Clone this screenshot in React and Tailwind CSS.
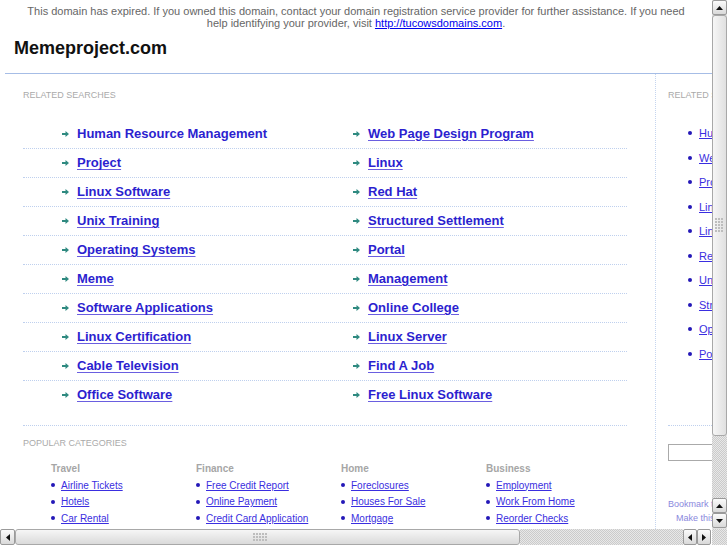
import React from "react";

const related = [
  ["Human Resource Management", "Web Page Design Program"],
  ["Project", "Linux"],
  ["Linux Software", "Red Hat"],
  ["Unix Training", "Structured Settlement"],
  ["Operating Systems", "Portal"],
  ["Meme", "Management"],
  ["Software Applications", "Online College"],
  ["Linux Certification", "Linux Server"],
  ["Cable Television", "Find A Job"],
  ["Office Software", "Free Linux Software"],
];

const categories = [
  { title: "Travel", links: ["Airline Tickets", "Hotels", "Car Rental"] },
  { title: "Finance", links: ["Free Credit Report", "Online Payment", "Credit Card Application"] },
  { title: "Home", links: ["Foreclosures", "Houses For Sale", "Mortgage"] },
  { title: "Business", links: ["Employment", "Work From Home", "Reorder Checks"] },
];

const sideLinks = [
  "Human Resource Management",
  "Web Page Design Program",
  "Project",
  "Linux",
  "Linux Software",
  "Red Hat",
  "Unix Training",
  "Structured Settlement",
  "Operating Systems",
  "Portal",
];

function Arrow() {
  return (
    <svg width="7" height="6" viewBox="0 0 7 6" className="shrink-0">
      <path d="M0 2h3.5V0L7 3 3.5 6V4H0z" fill="#2f8a80" />
    </svg>
  );
}

function Tri({ dir }) {
  const d = {
    up: "M0 4L3.5 0 7 4z",
    down: "M0 0h7L3.5 4z",
    left: "M4 0v7L0 3.5z",
    right: "M0 0l4 3.5L0 7z",
  }[dir];
  const vertical = dir === "up" || dir === "down";
  return (
    <svg width={vertical ? 7 : 4} height={vertical ? 4 : 7} viewBox={vertical ? "0 0 7 4" : "0 0 4 7"}>
      <path d={d} fill="#111" />
    </svg>
  );
}

function ScrollButton({ dir, className = "" }) {
  return (
    <div
      className={`flex items-center justify-center border border-[#9a9a9a] rounded-[2px] bg-gradient-to-b from-[#fbfbfb] to-[#d9d9d9] ${className}`}
    >
      <Tri dir={dir} />
    </div>
  );
}

function Grip({ vertical }) {
  const dots = [];
  const cols = vertical ? 3 : 5;
  const rows = vertical ? 5 : 3;
  for (let r = 0; r < rows; r++)
    for (let c = 0; c < cols; c++)
      dots.push(<rect key={`${r}-${c}`} x={c * 3} y={r * 3} width="2" height="2" fill="#bdbdbd" />);
  return (
    <svg width={cols * 3} height={rows * 3}>
      {dots}
    </svg>
  );
}

const track =
  "bg-[repeating-conic-gradient(#cbcbcb_0_25%,#e8e8e8_0_50%)] bg-[length:2px_2px]";

export default function App() {
  return (
    <div className="w-[727px] h-[545px] flex flex-col overflow-hidden bg-white font-['Liberation_Sans',Arial,sans-serif]">
      <div className="flex h-[529px]">
        <div className="w-[712px] h-full overflow-hidden">
          <p className="pt-[5px] px-[20px] text-center text-[11px] leading-[12px] text-[#666]">
            This domain has expired. If you owned this domain, contact your domain registration service provider for
            further assistance. If you need help identifying your provider, visit{" "}
            <a href="#" className="text-[#0000ee] underline">
              http://tucowsdomains.com
            </a>
            .
          </p>

          <div className="ml-[5px] w-[820px]">
            <h1 className="mt-[8px] pl-[9px] text-[18px] leading-[22px] font-bold text-[#111]">Memeproject.com</h1>
            <div className="mt-[14px] border-b border-[#a6bde6]" />

            <div className="flex">
              <div className="w-[651px] shrink-0 border-r border-dotted border-[#c5d5ef] pb-[40px]">
                <div className="pl-[18px] pt-[16px] text-[9px] leading-[11px] text-[#aaa]">RELATED SEARCHES</div>

                <div className="ml-[18px] w-[604px] mt-[18px] pb-[16px] border-b border-dotted border-[#bfd0ee]">
                  {related.map((row, i) => (
                    <div
                      key={i}
                      className={`flex h-[29px] items-center ${i > 0 ? "border-t border-dotted border-[#bfd0ee]" : ""}`}
                    >
                      {row.map((label, j) => (
                        <div
                          key={j}
                          className={`flex items-center gap-[8px] ${j === 0 ? "w-[330px] pl-[39px]" : ""}`}
                        >
                          <Arrow />
                          <a
                            href="#"
                            className={`text-[13px] font-bold text-[#2c1fcf] decoration-[#6a5ee0] underline-offset-2 ${
                              i === 0 && j === 0 ? "no-underline" : "underline"
                            }`}
                          >
                            {label}
                          </a>
                        </div>
                      ))}
                    </div>
                  ))}
                </div>

                <div className="pl-[18px] pt-[12px] text-[9px] leading-[11px] text-[#aaa]">POPULAR CATEGORIES</div>
                <div className="ml-[46px] mt-[14px] flex">
                  {categories.map((cat) => (
                    <div key={cat.title} className="w-[145px]">
                      <div className="text-[10px] leading-[12px] font-bold text-[#a6a6a6]">{cat.title}</div>
                      <ul className="mt-[2px]">
                        {cat.links.map((l) => (
                          <li key={l} className="flex items-center h-[16.5px]">
                            <span className="shrink-0 w-[4px] h-[4px] bg-[#2418b8] rounded-full mr-[6px]" />
                            <a href="#" className="text-[10px] text-[#3a2ee0] underline whitespace-nowrap">
                              {l}
                            </a>
                          </li>
                        ))}
                      </ul>
                    </div>
                  ))}
                </div>
              </div>

              <div className="w-[160px] shrink-0 pl-[12px]">
                <div className="pt-[16px] text-[9px] leading-[11px] text-[#aaa] whitespace-nowrap">RELATED SEARCHES</div>
                <ul className="mt-[20px] pl-[20px]">
                  {sideLinks.map((l) => (
                    <li key={l} className="flex items-center h-[24.5px]">
                      <span className="shrink-0 w-[4px] h-[4px] bg-[#2418b8] rounded-full mr-[7px]" />
                      <a href="#" className="text-[11px] text-[#3a2ee0] underline whitespace-nowrap">
                        {l}
                      </a>
                    </li>
                  ))}
                </ul>
                <div className="mt-[59px] w-[130px] border-b border-dotted border-[#bfd0ee]" />
                <input className="block mt-[18px] w-[120px] h-[17px] border border-[#aaa]" />
                <div className="mt-[36px] text-[9px] leading-[14px] text-[#8a88dd] whitespace-nowrap">
                  <div>Bookmark this page</div>
                  <div className="pl-[8px]">Make this your homepage</div>
                </div>
              </div>
            </div>
          </div>
        </div>

        <div className="w-[15px] h-full flex flex-col bg-[#e2e2e2]">
          <ScrollButton dir="up" className="h-[15px] shrink-0" />
          <div className="h-[421px] shrink-0 border border-[#a8a8a8] rounded-[3px] bg-gradient-to-r from-[#f6f6f6] to-[#e0e0e0] flex items-center justify-center">
            <Grip vertical />
          </div>
          <div className={`flex-1 ${track}`} />
          <ScrollButton dir="up" className="h-[15px] shrink-0" />
          <ScrollButton dir="down" className="h-[15px] shrink-0" />
          <div className="h-[1px]" />
        </div>
      </div>

      <div className="flex h-[16px]">
        <div className="w-[712px] h-full flex">
          <ScrollButton dir="left" className="w-[15px] shrink-0" />
          <div className="w-[505px] shrink-0 border border-[#a8a8a8] rounded-[3px] bg-gradient-to-b from-[#f6f6f6] to-[#dadada] flex items-center">
            <div className="ml-[237px]">
              <Grip />
            </div>
          </div>
          <div className={`flex-1 ${track}`} />
          <ScrollButton dir="left" className="w-[14px] shrink-0" />
          <ScrollButton dir="right" className="w-[14px] shrink-0" />
          <div className="w-[1px]" />
        </div>
        <div className={`w-[15px] h-full ${track}`} />
      </div>
    </div>
  );
}
